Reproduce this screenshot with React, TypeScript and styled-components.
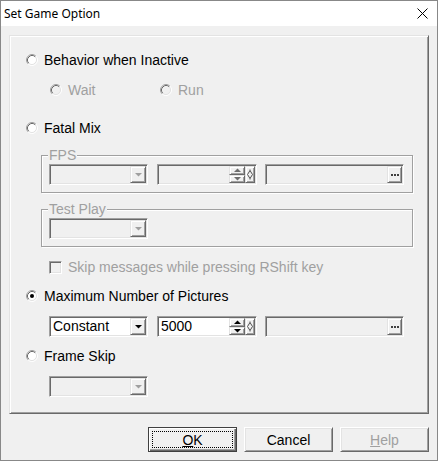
import styled, { createGlobalStyle, css } from "styled-components";

const DISABLED = "#a0a0a0";

const GlobalStyle = createGlobalStyle`
  html, body {
    margin: 0;
    padding: 0;
    background: #f0f0f0;
  }
  * {
    box-sizing: border-box;
  }
`;

const sunken = css`
  border: 1px solid;
  border-color: #a0a0a0 #fff #fff #a0a0a0;
  box-shadow: inset 1px 1px 0 #696969, inset -1px -1px 0 #e3e3e3;
  padding: 1px;
`;

const raised = css`
  border: 1px solid;
  border-color: #e3e3e3 #696969 #696969 #e3e3e3;
  box-shadow: inset 1px 1px 0 #fff, inset -1px -1px 0 #a0a0a0;
  background: #f0f0f0;
`;

const Window = styled.div`
  width: 438px;
  height: 461px;
  border: 1px solid #888;
  background: #f0f0f0;
  display: flex;
  flex-direction: column;
  font-family: "Liberation Sans", Arial, sans-serif;
  font-size: 14px;
  color: #000;
`;

const TitleBar = styled.div`
  height: 25px;
  flex-shrink: 0;
  background: #fff;
  display: flex;
  align-items: center;
  justify-content: space-between;
  padding: 0 9px 0 3px;
  font-family: "Noto Sans", "Open Sans", sans-serif;
  font-size: 12px;
`;

const Body = styled.div`
  display: flex;
  flex-direction: column;
  padding: 9px 8px 0 8px;
`;

const Panel = styled.div`
  height: 379px;
  display: flex;
  flex-direction: column;
  align-items: flex-start;
  padding: 14px 0 0 16px;
  border: 1px solid;
  border-color: #e3e3e3 #696969 #696969 #e3e3e3;
  box-shadow: inset 1px 1px 0 #fff, inset -1px -1px 0 #a0a0a0;
`;

const Option = styled.label<{ $disabled?: boolean; $top?: number; $indent?: number; $width?: number }>`
  display: flex;
  align-items: center;
  gap: 6px;
  height: 20px;
  margin-top: ${(p) => p.$top ?? 0}px;
  margin-left: ${(p) => p.$indent ?? 0}px;
  width: ${(p) => (p.$width ? `${p.$width}px` : "auto")};
  color: ${(p) => (p.$disabled ? DISABLED : "#000")};
  white-space: nowrap;
`;

const SubOptions = styled.div`
  display: flex;
  margin-top: 10px;
  padding-left: 24px;
`;

const GroupBox = styled.div<{ $top: number }>`
  width: 372px;
  margin: ${(p) => p.$top}px 0 0 15px;
  padding: 0 7px 7px 7px;
  border: 1px solid #a0a0a0;
  box-shadow: inset 1px 1px 0 #fff, 1px 1px 0 #fff;
`;

const GroupLabel = styled.span`
  display: block;
  width: fit-content;
  margin: -8px 0 2px -1px;
  padding: 0 1px;
  line-height: 14px;
  background: #f0f0f0;
  color: ${DISABLED};
`;

const ControlRow = styled.div<{ $top?: number; $indent?: number }>`
  display: flex;
  margin-top: ${(p) => p.$top ?? 0}px;
  margin-left: ${(p) => p.$indent ?? 0}px;
`;

const ComboBox = styled.div<{ $disabled?: boolean }>`
  ${sunken};
  width: 99px;
  height: 21px;
  display: flex;
  background: ${(p) => (p.$disabled ? "#f0f0f0" : "#fff")};
`;

const FieldText = styled.span`
  flex: 1;
  padding-left: 2px;
  line-height: 17px;
  overflow: hidden;
`;

const DropButton = styled.span`
  ${raised};
  width: 16px;
  display: flex;
  align-items: center;
  justify-content: center;
`;

const SpinEdit = styled.div<{ $disabled?: boolean }>`
  ${sunken};
  width: 100px;
  height: 21px;
  margin-left: 9px;
  display: flex;
  background: ${(p) => (p.$disabled ? "#f0f0f0" : "#fff")};
`;

const SpinButtons = styled.span`
  width: 16px;
  display: flex;
  flex-direction: column;
`;

const SpinButton = styled.span`
  ${raised};
  flex: 1;
  display: flex;
  align-items: center;
  justify-content: center;
`;

const StepBox = styled.span`
  ${raised};
  width: 10px;
  display: flex;
  align-items: center;
  justify-content: center;
`;

const BrowseEdit = styled.div`
  ${sunken};
  width: 139px;
  height: 21px;
  margin-left: 8px;
  display: flex;
  background: #f0f0f0;
`;

const BrowseButton = styled.span`
  ${raised};
  width: 15px;
  display: flex;
  align-items: center;
  justify-content: center;
`;

const CheckBox = styled.span`
  ${sunken};
  width: 13px;
  height: 13px;
  background: #f0f0f0;
`;

const ButtonRow = styled.div`
  display: flex;
  justify-content: flex-end;
  gap: 7px;
  margin-top: 13px;
`;

const DialogButton = styled.button<{ $default?: boolean }>`
  width: 89px;
  height: 25px;
  padding: 0;
  display: flex;
  align-items: center;
  justify-content: center;
  background: #f0f0f0;
  font-family: "Liberation Sans", Arial, sans-serif;
  font-size: 14px;
  color: #000;
  border: 1px solid;
  border-color: ${(p) => (p.$default ? "#404040" : "#fff #696969 #696969 #fff")};
  box-shadow: ${(p) =>
    p.$default
      ? "inset 1px 1px 0 #fff, inset -1px -1px 0 #696969, inset -2px -2px 0 #a0a0a0"
      : "inset 1px 1px 0 #e3e3e3, inset -1px -1px 0 #a0a0a0"};

  &:disabled {
    color: ${DISABLED};
  }
`;

const FocusRing = styled.span`
  width: 81px;
  height: 17px;
  border: 1px dotted #000;
  display: flex;
  align-items: center;
  justify-content: center;
`;

const Radio = ({ checked, disabled }: { checked?: boolean; disabled?: boolean }) => (
  <svg width="12" height="12" viewBox="0 0 12 12">
    <circle cx="6" cy="6" r="4.5" fill={disabled ? "#f0f0f0" : "#fff"} />
    <path d="M2.11 9.89A5.5 5.5 0 0 1 9.89 2.11" fill="none" stroke="#a0a0a0" />
    <path d="M9.89 2.11A5.5 5.5 0 0 1 2.11 9.89" fill="none" stroke="#fff" />
    <path d="M2.82 9.18A4.5 4.5 0 0 1 9.18 2.82" fill="none" stroke="#696969" />
    <path d="M9.18 2.82A4.5 4.5 0 0 1 2.82 9.18" fill="none" stroke="#e3e3e3" />
    {checked && <circle cx="6" cy="6" r="2" fill="#000" />}
  </svg>
);

const Arrow = ({ up, color }: { up?: boolean; color: string }) => (
  <svg width="7" height="4" viewBox="0 0 7 4">
    <path d={up ? "M0 4H7L3.5 0.5Z" : "M0 0H7L3.5 3.5Z"} fill={color} />
  </svg>
);

const Combo = ({ value, disabled }: { value?: string; disabled?: boolean }) => (
  <ComboBox $disabled={disabled}>
    <FieldText>{value}</FieldText>
    <DropButton>
      <Arrow color={disabled ? DISABLED : "#000"} />
    </DropButton>
  </ComboBox>
);

const Spin = ({ value, disabled }: { value?: string; disabled?: boolean }) => (
  <SpinEdit $disabled={disabled}>
    <FieldText>{value}</FieldText>
    <SpinButtons>
      <SpinButton>
        <Arrow up color={disabled ? "#6d6d6d" : "#000"} />
      </SpinButton>
      <SpinButton>
        <Arrow color={disabled ? "#6d6d6d" : "#000"} />
      </SpinButton>
    </SpinButtons>
    <StepBox>
      <svg width="6" height="11" viewBox="0 0 6 11">
        <path d="M3 0.5V1.5M3 9.5V10.5M3 1.5L5.5 5.5L3 9.5L0.5 5.5Z" fill="none" stroke="#505050" />
      </svg>
    </StepBox>
  </SpinEdit>
);

const Browse = () => (
  <BrowseEdit>
    <FieldText />
    <BrowseButton>
      <svg width="8" height="2" viewBox="0 0 8 2">
        <rect x="0" width="2" height="2" fill="#404040" />
        <rect x="3" width="2" height="2" fill="#404040" />
        <rect x="6" width="2" height="2" fill="#404040" />
      </svg>
    </BrowseButton>
  </BrowseEdit>
);

const App = () => (
  <>
    <GlobalStyle />
    <Window>
      <TitleBar>
        <span>Set Game Option</span>
        <svg width="11" height="11" viewBox="0 0 11 11">
          <path d="M0.5 0.5L10.5 10.5M10.5 0.5L0.5 10.5" stroke="#000" strokeWidth="1" />
        </svg>
      </TitleBar>
      <Body>
        <Panel>
          <Option>
            <Radio />
            Behavior when Inactive
          </Option>
          <SubOptions>
            <Option $disabled $width={110}>
              <Radio disabled />
              Wait
            </Option>
            <Option $disabled>
              <Radio disabled />
              Run
            </Option>
          </SubOptions>
          <Option $top={18}>
            <Radio />
            Fatal Mix
          </Option>
          <GroupBox $top={17}>
            <GroupLabel>FPS</GroupLabel>
            <ControlRow>
              <Combo disabled />
              <Spin disabled />
              <Browse />
            </ControlRow>
          </GroupBox>
          <GroupBox $top={16}>
            <GroupLabel>Test Play</GroupLabel>
            <ControlRow>
              <Combo disabled />
            </ControlRow>
          </GroupBox>
          <Option $disabled $top={10} $indent={23}>
            <CheckBox />
            Skip messages while pressing RShift key
          </Option>
          <Option $top={9}>
            <Radio checked />
            Maximum Number of Pictures
          </Option>
          <ControlRow $top={10} $indent={23}>
            <Combo value="Constant" />
            <Spin value="5000" />
            <Browse />
          </ControlRow>
          <Option $top={9}>
            <Radio />
            Frame Skip
          </Option>
          <ControlRow $top={10} $indent={23}>
            <Combo disabled />
          </ControlRow>
        </Panel>
        <ButtonRow>
          <DialogButton $default>
            <FocusRing>
              <span>
                <u>O</u>K
              </span>
            </FocusRing>
          </DialogButton>
          <DialogButton>Cancel</DialogButton>
          <DialogButton disabled>
            <span>
              <u>H</u>elp
            </span>
          </DialogButton>
        </ButtonRow>
      </Body>
    </Window>
  </>
);

export default App;
